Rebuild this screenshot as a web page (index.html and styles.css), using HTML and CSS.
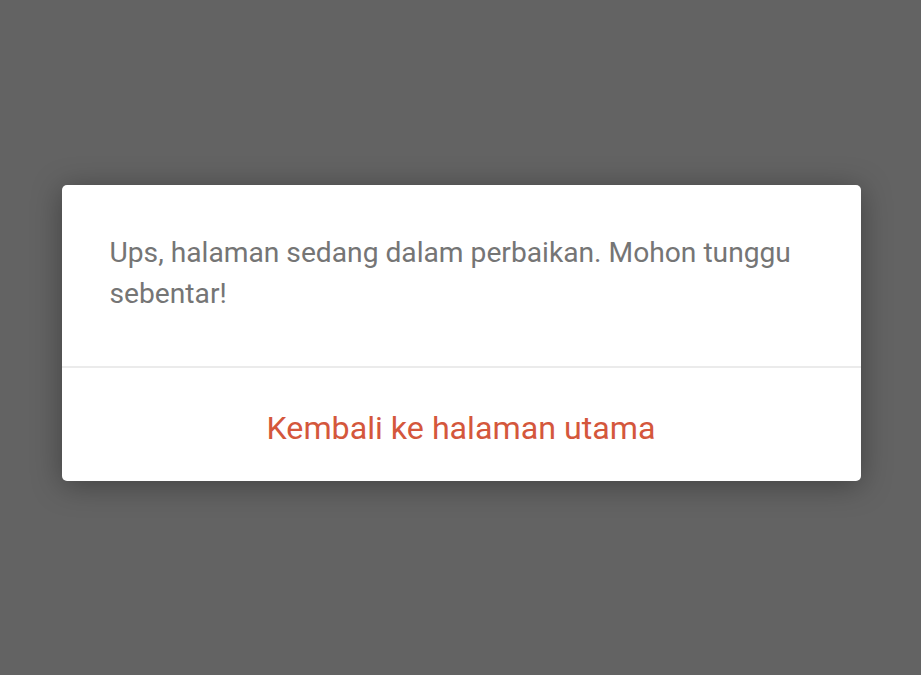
FILE: index.html
```html
<!DOCTYPE html>
<html lang="id">
<head>
<meta charset="utf-8">
<link rel="stylesheet" href="styles.css">
</head>
<body>
<div class="overlay">
  <div class="dialog">
    <p class="message">Ups, halaman sedang dalam perbaikan. Mohon tunggu sebentar!</p>
    <div class="divider"></div>
    <button class="action">Kembali ke halaman utama</button>
  </div>
</div>
</body>
</html>
```
FILE: styles.css
```css
html, body {
  margin: 0;
  padding: 0;
  width: 921px;
  height: 675px;
  background: #636363;
  font-family: Roboto, "Liberation Sans", sans-serif;
}
.overlay {
  display: flex;
  justify-content: center;
  padding-top: 185px;
}
.dialog {
  width: 799px;
  height: 296px;
  margin-left: 1px;
  background: #ffffff;
  border-radius: 5px;
  box-shadow: 0 4px 30px rgba(0, 0, 0, 0.35);
  display: flex;
  flex-direction: column;
}
.message {
  margin: 0;
  padding: 47px 40px 0 48px;
  height: 135px;
  box-sizing: border-box;
  font-size: 28.2px;
  line-height: 41px;
  color: #757575;
}
.divider {
  height: 2px;
  background: #ebebeb;
  margin-top: 46px;
}
.action {
  flex: 1;
  border: none;
  background: transparent;
  font-family: inherit;
  font-size: 32.2px;
  color: #d4573c;
  padding: 7px 0 0 0;
}
```
